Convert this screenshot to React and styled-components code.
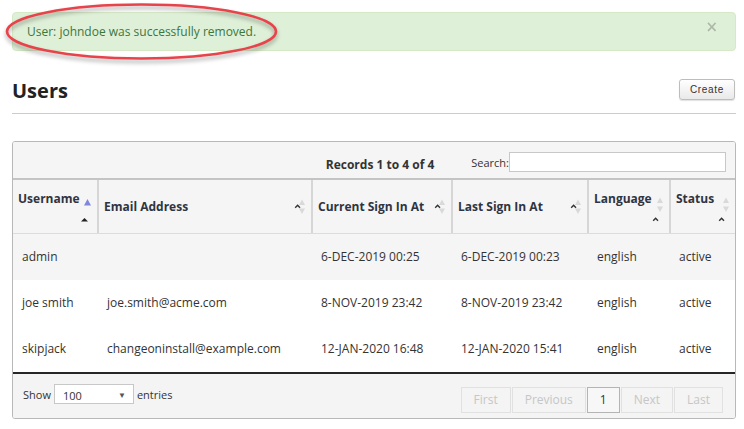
import React from 'react';
import styled, { createGlobalStyle } from 'styled-components';

const GlobalStyle = createGlobalStyle`
  *, *::before, *::after { box-sizing: border-box; }
  html, body { margin: 0; padding: 0; background: #fff; }
  body {
    font-family: "Open Sans", "Liberation Sans", Arial, sans-serif;
    color: #333;
    font-size: 12px;
  }
`;

const COLS = '86px 214px 140px 136px 82px 64px';

const Page = styled.div`
  position: relative;
  width: 744px;
  padding: 12px 8px 0 12px;
`;

const Alert = styled.div`
  display: flex;
  align-items: center;
  justify-content: space-between;
  height: 39px;
  padding: 0 17px 0 14px;
  background: #dff0d8;
  border: 1px solid #d6e9c6;
  border-radius: 4px;
  color: #3c763d;
  font-size: 12px;
  line-height: 16px;
`;

const Close = styled.span`
  font-family: "DejaVu Sans", "Liberation Sans", sans-serif;
  font-size: 15px;
  font-weight: 700;
  line-height: 1;
  color: #000;
  opacity: 0.22;
  margin-top: -8px;
  text-shadow: 0 1px 0 #fff;
`;

const Annotation = styled.svg`
  position: absolute;
  left: 3px;
  top: 1px;
  overflow: visible;
  filter: drop-shadow(0 3px 2px rgba(0, 0, 0, 0.35));
  pointer-events: none;
`;

const TitleBar = styled.div`
  display: flex;
  justify-content: space-between;
  align-items: flex-start;
  margin-top: 26px;
  padding-bottom: 9px;
  border-bottom: 1px solid #cccccc;
`;

const Title = styled.h1`
  margin: 0;
  font-size: 20px;
  line-height: 27px;
  font-weight: 700;
  color: #222;
`;

const CreateButton = styled.button`
  margin-top: 2px;
  margin-right: 1px;
  width: 56px;
  height: 21px;
  padding: 0;
  border: 1px solid #bdbdbd;
  border-radius: 3px;
  background: linear-gradient(#ffffff, #e9e9e9);
  box-shadow: 0 1px 1px rgba(0, 0, 0, 0.12);
  font-family: "Liberation Sans", Arial, sans-serif;
  font-size: 10px;
  letter-spacing: 0.7px;
  color: #333;
`;

const Panel = styled.div`
  margin-top: 27px;
  border: 1px solid #b8b8b8;
  border-radius: 3px;
  overflow: hidden;
  background: #fff;
`;

const Toolbar = styled.div`
  display: flex;
  justify-content: flex-end;
  height: 38px;
  padding-right: 9px;
  background: #f5f5f5;
  border-bottom: 2px solid #c4c4c4;
`;

const Records = styled.div`
  align-self: flex-end;
  margin: 0 37px 5px 0;
  font-weight: 700;
  line-height: 16px;
  color: #333;
`;

const SearchGroup = styled.label`
  align-self: flex-start;
  display: flex;
  align-items: center;
  margin-top: 10px;
  font-size: 11px;
  line-height: 15px;
  color: #333;
`;

const SearchInput = styled.input`
  width: 217px;
  height: 20px;
  margin-left: 0;
  border: 1px solid #c8c8c8;
  background: #fff;
  padding: 0 4px;
`;

const HeadRow = styled.div`
  display: grid;
  grid-template-columns: ${COLS};
  height: 54px;
  background: #f5f5f5;
  border-bottom: 1px solid #dcdcdc;
`;

const Th = styled.div`
  display: flex;
  align-items: ${(p) => (p.$stacked ? 'flex-start' : 'center')};
  padding: ${(p) => (p.$stacked ? '11px' : '0')} 6px 0 5px;
  border-right: 2px solid #d6d6d6;
  font-weight: 700;
  line-height: 16px;
  color: #2f3440;
  &:last-child {
    border-right: 0;
  }
`;

const Label = styled.span`
  flex: 1;
  white-space: nowrap;
`;

const SortSvg = styled.svg`
  flex: none;
  display: block;
  margin-top: ${(p) => p.$top || 0}px;
`;

const Row = styled.div`
  display: grid;
  grid-template-columns: ${COLS};
  align-items: center;
  height: 46px;
  background: ${(p) => (p.$shaded ? '#f5f5f5' : '#fff')};
`;

const Td = styled.div`
  padding-left: ${(p) => (p.$first ? 9 : 8)}px;
  white-space: nowrap;
  line-height: 16px;
  color: #333;
`;

const Body = styled.div`
  border-bottom: 2px solid #262626;
`;

const Footer = styled.div`
  display: flex;
  justify-content: space-between;
  align-items: flex-start;
  height: 44px;
  padding: 0 12px 0 10px;
  background: #f4f4f4;
`;

const LengthGroup = styled.div`
  display: flex;
  align-items: center;
  gap: 3px;
  margin-top: 10px;
  font-size: 11px;
  line-height: 15px;
  color: #333;
`;

const SelectBox = styled.div`
  display: flex;
  align-items: center;
  justify-content: space-between;
  width: 80px;
  height: 20px;
  padding: 2px 7px 0 8px;
  border: 1px solid #c8c8c8;
  background: #fff;
  font-size: 11px;
  color: #333;
`;

const Caret = styled.span`
  font-size: 8px;
  color: #555;
  margin-top: -2px;
`;

const Pager = styled.div`
  display: flex;
  gap: 1px;
  margin-top: 13px;
`;

const PageButton = styled.span`
  height: 26px;
  padding: 0 12px;
  line-height: 24px;
  font-size: 12px;
  border: 1px solid ${(p) => (p.$current ? '#b4b4b4' : '#e1e1e1')};
  color: ${(p) => (p.$current ? '#333' : '#c6c6c6')};
  background: ${(p) => (p.$current ? '#f7f7f7' : 'transparent')};
`;

const FADED = '#d9d9d9';

function InlineSort() {
  return (
    <SortSvg width="11" height="16" viewBox="0 0 11 16">
      <polygon points="5,6 8,0.5 11,6" fill={FADED} />
      <polygon points="5,9.5 8,15 11,9.5" fill={FADED} />
      <polyline points="1.2,8.8 3.6,6.3 6,8.8" fill="none" stroke="#333" strokeWidth="1.4" />
    </SortSvg>
  );
}

function StackedSort() {
  return (
    <SortSvg width="11" height="25" viewBox="0 0 11 25" $top={6}>
      <polygon points="5,6 8,0.5 11,6" fill={FADED} />
      <polygon points="5,9.5 8,15 11,9.5" fill={FADED} />
      <polyline points="1.2,23.8 3.6,21.3 6,23.8" fill="none" stroke="#333" strokeWidth="1.4" />
    </SortSvg>
  );
}

function ActiveSort() {
  return (
    <SortSvg width="10" height="23" viewBox="0 0 10 23" $top={8}>
      <polygon points="3,6.5 6.5,0 10,6.5" fill="#7f86dc" />
      <polygon points="0,22.5 3.5,19 7,22.5" fill="#222" />
    </SortSvg>
  );
}

const columns = [
  { label: 'Username', kind: 'active' },
  { label: 'Email Address', kind: 'inline' },
  { label: 'Current Sign In At', kind: 'inline' },
  { label: 'Last Sign In At', kind: 'inline' },
  { label: 'Language', kind: 'stacked' },
  { label: 'Status', kind: 'stacked' },
];

const rows = [
  ['admin', '', '6-DEC-2019 00:25', '6-DEC-2019 00:23', 'english', 'active'],
  ['joe smith', 'joe.smith@acme.com', '8-NOV-2019 23:42', '8-NOV-2019 23:42', 'english', 'active'],
  ['skipjack', 'changeoninstall@example.com', '12-JAN-2020 16:48', '12-JAN-2020 15:41', 'english', 'active'],
];

const pages = [
  { label: 'First' },
  { label: 'Previous' },
  { label: '1', current: true },
  { label: 'Next' },
  { label: 'Last' },
];

export default function App() {
  return (
    <>
      <GlobalStyle />
      <Page>
        <Alert>
          <span>User: johndoe was successfully removed.</span>
          <Close>×</Close>
        </Alert>
        <Annotation width="276" height="60" viewBox="0 0 276 60">
          <ellipse cx="138.5" cy="30.5" rx="134.5" ry="27" fill="none" stroke="#e8434a" strokeWidth="2.6" />
        </Annotation>

        <TitleBar>
          <Title>Users</Title>
          <CreateButton>Create</CreateButton>
        </TitleBar>

        <Panel>
          <Toolbar>
            <Records>Records 1 to 4 of 4</Records>
            <SearchGroup>
              Search:
              <SearchInput type="text" />
            </SearchGroup>
          </Toolbar>

          <HeadRow>
            {columns.map((c) => (
              <Th key={c.label} $stacked={c.kind !== 'inline'}>
                <Label>{c.label}</Label>
                {c.kind === 'inline' && <InlineSort />}
                {c.kind === 'stacked' && <StackedSort />}
                {c.kind === 'active' && <ActiveSort />}
              </Th>
            ))}
          </HeadRow>

          <Body>
            {rows.map((r, i) => (
              <Row key={r[0]} $shaded={i === 0}>
                {r.map((cell, j) => (
                  <Td key={j} $first={j === 0}>
                    {cell}
                  </Td>
                ))}
              </Row>
            ))}
          </Body>

          <Footer>
            <LengthGroup>
              Show
              <SelectBox>
                <span>100</span>
                <Caret>▼</Caret>
              </SelectBox>
              entries
            </LengthGroup>
            <Pager>
              {pages.map((p) => (
                <PageButton key={p.label} $current={p.current}>
                  {p.label}
                </PageButton>
              ))}
            </Pager>
          </Footer>
        </Panel>
      </Page>
    </>
  );
}
